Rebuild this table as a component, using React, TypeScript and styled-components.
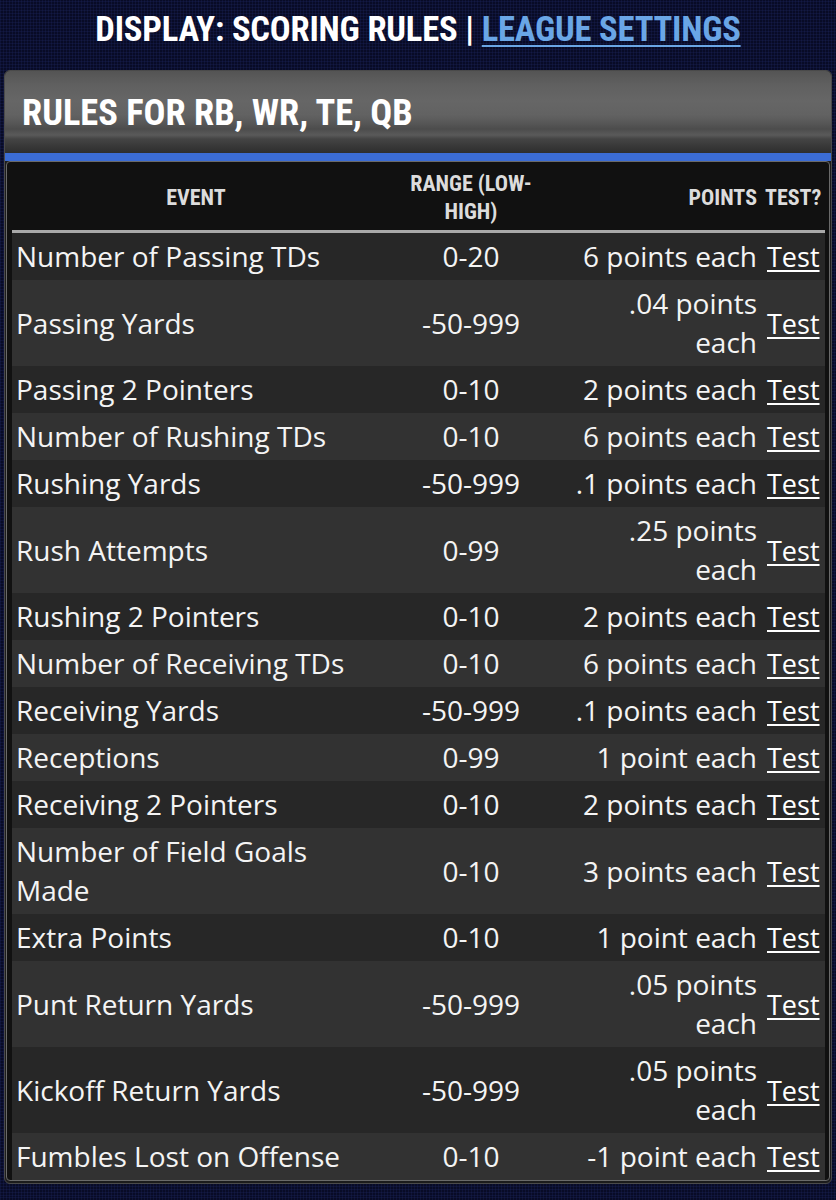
import React from "react";
import styled, { createGlobalStyle } from "styled-components";

const GlobalStyle = createGlobalStyle`
  html, body {
    margin: 0;
    padding: 0;
  }
  body {
    background-color: #080b26;
    background-image:
      repeating-linear-gradient(0deg, rgba(30, 40, 100, 0.28) 0 1px, transparent 1px 3px),
      repeating-linear-gradient(90deg, rgba(30, 40, 100, 0.28) 0 1px, transparent 1px 3px);
    font-family: "Open Sans", "Noto Sans", sans-serif;
  }
`;

const condensed = `
  font-family: "Roboto Condensed", "Liberation Sans Narrow", "DejaVu Sans Condensed", Roboto, sans-serif;
  font-stretch: condensed;
  font-weight: 700;
`;

const Page = styled.div`
  padding: 0 4px 12px;
`;

const TitleBar = styled.h1`
  ${condensed}
  margin: 0;
  height: 70px;
  padding-bottom: 12px;
  box-sizing: border-box;
  display: flex;
  align-items: center;
  justify-content: center;
  gap: 8px;
  font-size: 34.6px;
  color: #ffffff;
  letter-spacing: -0.2px;
`;

const TitleLink = styled.a`
  color: #6aa6e6;
  text-decoration: underline;
  text-decoration-thickness: 2px;
  text-underline-offset: 4px;
`;

const Panel = styled.section`
  border: 1px solid #4a4a4a;
  border-radius: 6px;
  overflow: hidden;
  background: #1c1c1c;
  padding-bottom: 2px;
`;

const PanelHeader = styled.h2`
  ${condensed}
  margin: 0;
  height: 82px;
  padding-left: 17px;
  display: flex;
  align-items: center;
  font-size: 36.4px;
  color: #ffffff;
  background: linear-gradient(
    180deg,
    #545454 0px,
    #606060 14px,
    #666666 30px,
    #626262 44px,
    #575757 52px,
    #4c4c4c 58px,
    #5a5a5a 64px,
    #444444 68px,
    #3a3a3a 74px,
    #2e2e2e 82px
  );
`;

const BlueBar = styled.div`
  height: 8px;
  background: #3b6cd4;
`;

const TableBox = styled.div`
  margin: 0 1px;
  border: 1px solid #6a6a6a;
  border-radius: 4px;
  background: #111111;
  padding: 0 4px 0 5px;
`;

const Row = styled.div<{ $shade?: "head" | "odd" | "even" }>`
  display: grid;
  grid-template-columns: 1fr 182px 199px 64px;
  align-items: center;
  background: ${(p) =>
    p.$shade === "head" ? "#111111" : p.$shade === "even" ? "#323232" : "#272727"};
`;

const HeadRow = styled(Row)`
  height: 68px;
  border-bottom: 3px solid #a9a9a9;
`;

const HeadCell = styled.div<{ $align?: "left" | "center" | "right" }>`
  ${condensed}
  font-size: 22px;
  line-height: 28px;
  padding-top: 4px;
  color: #dcdcdc;
  text-align: ${(p) => p.$align || "center"};
  padding-left: 4px;
  padding-right: 4px;
`;

const RangeHead = styled.span`
  display: inline-block;
  max-width: 125px;
`;

const Cell = styled.div<{ $align?: "left" | "center" | "right" }>`
  font-family: "Open Sans", "Noto Sans", sans-serif;
  font-size: 28px;
  line-height: 39px;
  color: #f4f4f4;
  padding: 4px 4px;
  text-align: ${(p) => p.$align || "left"};
`;

const PointsCell = styled(Cell)`
  padding-left: 12px;
`;

const TestLink = styled.a`
  font-family: "Open Sans", "Noto Sans", sans-serif;
  font-size: 27px;
  line-height: 39px;
  color: #ffffff;
  text-decoration: underline;
  text-underline-offset: 3px;
  padding-left: 6px;
`;

const rules: [string, string, string][] = [
  ["Number of Passing TDs", "0-20", "6 points each"],
  ["Passing Yards", "-50-999", ".04 points each"],
  ["Passing 2 Pointers", "0-10", "2 points each"],
  ["Number of Rushing TDs", "0-10", "6 points each"],
  ["Rushing Yards", "-50-999", ".1 points each"],
  ["Rush Attempts", "0-99", ".25 points each"],
  ["Rushing 2 Pointers", "0-10", "2 points each"],
  ["Number of Receiving TDs", "0-10", "6 points each"],
  ["Receiving Yards", "-50-999", ".1 points each"],
  ["Receptions", "0-99", "1 point each"],
  ["Receiving 2 Pointers", "0-10", "2 points each"],
  ["Number of Field Goals Made", "0-10", "3 points each"],
  ["Extra Points", "0-10", "1 point each"],
  ["Punt Return Yards", "-50-999", ".05 points each"],
  ["Kickoff Return Yards", "-50-999", ".05 points each"],
  ["Fumbles Lost on Offense", "0-10", "-1 point each"],
];

export default function App() {
  return (
    <>
      <GlobalStyle />
      <Page>
        <TitleBar>
          <span>DISPLAY: SCORING RULES |</span>
          <TitleLink href="#">LEAGUE SETTINGS</TitleLink>
        </TitleBar>
        <Panel>
          <PanelHeader>RULES FOR RB, WR, TE, QB</PanelHeader>
          <BlueBar />
          <TableBox>
            <HeadRow $shade="head">
              <HeadCell>EVENT</HeadCell>
              <HeadCell>
                <RangeHead>RANGE (LOW-HIGH)</RangeHead>
              </HeadCell>
              <HeadCell $align="right">POINTS</HeadCell>
              <HeadCell $align="left">TEST?</HeadCell>
            </HeadRow>
            {rules.map(([event, range, points], i) => (
              <Row key={event} $shade={i % 2 === 0 ? "odd" : "even"}>
                <Cell>{event}</Cell>
                <Cell $align="center">{range}</Cell>
                <PointsCell $align="right">{points}</PointsCell>
                <div>
                  <TestLink href="#">Test</TestLink>
                </div>
              </Row>
            ))}
          </TableBox>
        </Panel>
      </Page>
    </>
  );
}
